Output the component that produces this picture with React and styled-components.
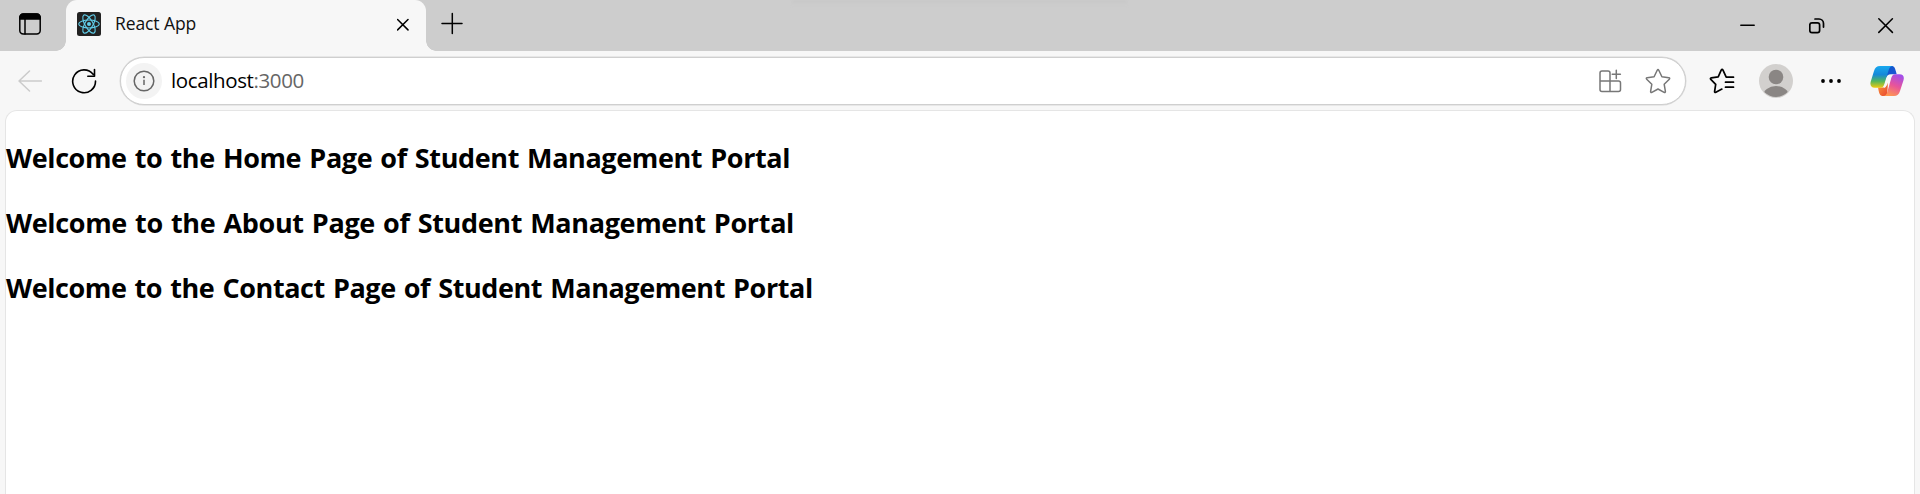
import React from 'react';
import styled, { createGlobalStyle } from 'styled-components';

const GlobalStyle = createGlobalStyle`
  *, *::before, *::after { box-sizing: border-box; }
  body {
    margin: 0;
    background: #f7f7f7;
    font-family: "Segoe UI", "Open Sans", "Noto Sans", sans-serif;
    overflow: hidden;
  }
`;

const Window = styled.div`
  display: flex;
  flex-direction: column;
  width: 1920px;
  height: 494px;
  background: #f7f7f7;
`;

const TabStrip = styled.header`
  position: relative;
  display: flex;
  flex: none;
  height: 51px;
  background: #cdcdcd;
`;

const TopShade = styled.div`
  position: absolute;
  top: 0;
  left: 792px;
  width: 335px;
  height: 6px;
  background: linear-gradient(#c8c8c8, #cdcdcd);
  filter: blur(1px);
`;

const Button = styled.button`
  display: flex;
  flex: none;
  align-items: center;
  justify-content: center;
  width: ${(p) => p.$width}px;
  height: ${(p) => p.$height || 48}px;
  margin: 0 0 0 ${(p) => p.$gap || 0}px;
  padding: 0;
  border: 0;
  background: none;
`;

const Icon = styled.svg`
  display: block;
  flex: none;
  fill: none;
  stroke: ${(p) => p.$color || '#000'};
  stroke-width: ${(p) => p.$weight || 1.5};
  stroke-linecap: round;
  stroke-linejoin: round;
`;

const Tab = styled.div`
  position: relative;
  display: flex;
  align-items: center;
  width: 360px;
  height: 51px;
  margin-left: 6px;
  padding: 0 17px 3px 11px;
  border-radius: 11px 11px 0 0;
  background: #f7f7f7;

  &::before, &::after {
    content: "";
    position: absolute;
    bottom: 0;
    width: 10px;
    height: 10px;
  }
  &::before {
    left: -10px;
    background: radial-gradient(circle at 0 0, transparent 9.5px, #f7f7f7 10px);
  }
  &::after {
    right: -10px;
    background: radial-gradient(circle at 100% 0, transparent 9.5px, #f7f7f7 10px);
  }
`;

const TabTitle = styled.span`
  flex: 1;
  margin-left: 14px;
  padding-bottom: 2px;
  font-size: 17.5px;
  line-height: 24px;
  letter-spacing: -0.1px;
  color: #111;
  white-space: nowrap;
`;

const WindowControls = styled.div`
  display: flex;
  margin-left: auto;
`;

const Toolbar = styled.nav`
  display: flex;
  flex: none;
  align-items: center;
  height: 59px;
`;

const AddressBar = styled.div`
  display: flex;
  flex: none;
  align-items: center;
  width: 1566px;
  height: 48px;
  margin-left: 12px;
  padding: 0 14px 0 5px;
  border: 1.5px solid #cfcfcf;
  border-radius: 24px;
  background: #fff;
  box-shadow: 0 0 0 0.5px #d8d8d8;
`;

const SiteInfo = styled.span`
  display: flex;
  align-items: center;
  justify-content: center;
  width: 36px;
  height: 36px;
  border-radius: 50%;
  background: #f3f3f3;
`;

const Url = styled.span`
  margin-left: 9px;
  padding-bottom: 1px;
  font-size: 20.5px;
  line-height: 28px;
  letter-spacing: -0.38px;
  color: #000;
  white-space: nowrap;
`;

const Port = styled.span`
  color: #666;
`;

const AddressActions = styled.div`
  display: flex;
  margin-left: auto;
`;

const Page = styled.main`
  display: flex;
  flex: 1;
  flex-direction: column;
  gap: 25px;
  margin: 0 5px;
  padding: 27px 0 0;
  border: 1px solid #e5e5e5;
  border-bottom: 0;
  border-radius: 12px 12px 0 0;
  background: #fff;
`;

const Heading = styled.h2`
  margin: 0;
  font-size: 27px;
  font-weight: 700;
  line-height: 40px;
  letter-spacing: ${(p) => p.$tracking}px;
  word-spacing: 1.5px;
  color: #000;
  white-space: nowrap;
`;

const TabActionsIcon = () => (
  <Icon width="24" height="24" viewBox="0 0 24 24">
    <rect x="1.8" y="2" width="20.4" height="20" rx="3.5" />
    <path d="M1.8 7V5.5A3.5 3.5 0 0 1 5.3 2h13.4a3.5 3.5 0 0 1 3.5 3.5V7z" fill="#000" />
    <path d="M7 7v15" />
  </Icon>
);

const ReactIcon = () => (
  <Icon width="24" height="24" viewBox="0 0 24 24" $color="#61cfeb" $weight="1.1">
    <rect width="24" height="24" rx="2.5" fill="#222" stroke="none" />
    <ellipse cx="12" cy="12" rx="10.3" ry="4" />
    <ellipse cx="12" cy="12" rx="10.3" ry="4" transform="rotate(60 12 12)" />
    <ellipse cx="12" cy="12" rx="10.3" ry="4" transform="rotate(120 12 12)" />
    <circle cx="12" cy="12" r="2" fill="#61cfeb" stroke="none" />
  </Icon>
);

const BackIcon = () => (
  <Icon width="24" height="24" viewBox="0 0 24 24" $color="#cbcbcb">
    <path d="M11.5 2 1 12l10.500 10M1 12h22.500" />
  </Icon>
);

const ReloadIcon = () => (
  <Icon width="26" height="26" viewBox="0 0 26 26" $weight="1.6">
    <path d="M24.500 13A11.400 11.400 0 1 1 22.100 6.300M23.500 1.500v6.800h-6.700" />
  </Icon>
);

const InfoIcon = () => (
  <Icon width="22" height="22" viewBox="0 0 22 22" $color="#666" $weight="1.5">
    <circle cx="11" cy="11" r="9.800" />
    <path d="M11 9.800v5.200" strokeLinecap="butt" />
    <circle cx="11" cy="7.200" r="1.100" fill="#666" stroke="none" />
  </Icon>
);

const AppsIcon = () => (
  <Icon width="24" height="24" viewBox="0 0 24 24" $color="#777" $weight="1.5">
    <path d="M2 12V4a2 2 0 0 1 2-2h6a2 2 0 0 1 2 2v8h8.500a2 2 0 0 1 2 2v6.500a2 2 0 0 1-2 2H4a2 2 0 0 1-2-2zM2 12h10v10.500M18.300 1.200v8.200M14.200 5.300h8.200" />
  </Icon>
);

const StarIcon = () => (
  <Icon width="26" height="26" viewBox="0 0 26 26" $color="#777" $weight="1.5">
    <path d="M12.200 2.300q.8-1.400 1.600 0l3.100 6.500 6.900 1q1.500.3.500 1.500l-5.100 5 1.200 7.100q.1 1.500-1.300.9L13 21l-6.100 3.300q-1.400.6-1.300-.9l1.200-7.100-5.100-5q-1-1.200.5-1.500l6.900-1z" />
  </Icon>
);

const FavoritesIcon = () => (
  <Icon width="26" height="26" viewBox="0 0 26 26" $weight="1.7">
    <path d="M24.500 9.200h-7.300L14 2.200q-.9-1.600-1.800 0l-3 6.700-6.900 1q-1.500.3-.5 1.500l4.900 5-1.100 7.100q-.1 1.400 1.300.8l6-3.200M16.500 14.200h8M16.500 19.200h8" />
  </Icon>
);

const AvatarIcon = () => (
  <Icon width="34" height="34" viewBox="0 0 34 34">
    <defs>
      <clipPath id="avatar"><circle cx="17" cy="17" r="16" /></clipPath>
    </defs>
    <circle cx="17" cy="17" r="17" fill="#d2d0ce" stroke="none" />
    <g clipPath="url(#avatar)" fill="#8a8684" stroke="none">
      <circle cx="17" cy="13" r="7.300" />
      <ellipse cx="17" cy="32" rx="13" ry="10" />
    </g>
  </Icon>
);

const MoreIcon = () => (
  <Icon width="22" height="6" viewBox="0 0 22 6">
    <g fill="#000" stroke="none">
      <circle cx="3" cy="3" r="1.900" />
      <circle cx="11" cy="3" r="1.900" />
      <circle cx="19" cy="3" r="1.900" />
    </g>
  </Icon>
);

const CopilotIcon = () => (
  <Icon width="34" height="32" viewBox="0 0 34 32">
    <defs>
      <linearGradient id="cool" x1="0" y1="0" x2="0" y2="1">
        <stop offset="0" stopColor="#18a9ef" />
        <stop offset=".4" stopColor="#1688d8" />
        <stop offset=".7" stopColor="#53b65d" />
        <stop offset="1" stopColor="#f0ca10" />
      </linearGradient>
      <linearGradient id="warm" x1=".7" y1="0" x2=".3" y2="1">
        <stop offset="0" stopColor="#a24eea" />
        <stop offset=".5" stopColor="#e8549a" />
        <stop offset="1" stopColor="#ff994f" />
      </linearGradient>
      <linearGradient id="fold" x1="0" y1="0" x2="1" y2="1">
        <stop offset="0" stopColor="#0a58c9" />
        <stop offset="1" stopColor="#2455d8" />
      </linearGradient>
      <linearGradient id="ember" x1="0" y1="0" x2="1" y2="1">
        <stop offset="0" stopColor="#f99b3d" />
        <stop offset="1" stopColor="#e94330" />
      </linearGradient>
    </defs>
    <g stroke="none">
      <path d="M17 1h4.500c3 0 3.500 2.200 4.300 5l.9 3.200H21c-3 0-4.500 1.500-5.500 5z" fill="url(#fold)" />
      <path d="M17 31h-4c-3 0-3.600-2.200-4.300-5L8 22.600h4.500c3 0 4.500-1.500 5.500-5z" fill="url(#ember)" />
      <path d="M10 1h13c-2.300 0-3.500 1.500-4.300 4l-4 13c-1 3.500-2 4.700-4.700 4.700H4.700C1 22.700-.2 20.300.7 16.700L4 6C5 2.500 6.800 1 10 1z" fill="url(#cool)" />
      <path d="M24 31H13c2.300 0 3.500-1.500 4.300-4l3.700-13c1-3.500 2-4.800 4.700-4.800h3.800c3.700 0 5 2.400 4 6L30 26c-1 3.500-2.800 5-6 5z" fill="url(#warm)" />
      <path d="M20.500 10.700c-1.400 1-2 2.300-2.700 4.600l-1.800 6c-.4 1.300-1.200 1.700-2.500 1.700l.8-2 2.700-9c.4-1.100 1.400-1.500 3.500-1.300z" fill="#f7f7f7" />
    </g>
  </Icon>
);

const headings = [
  { page: 'Home', tracking: -0.39 },
  { page: 'About', tracking: -0.35 },
  { page: 'Contact', tracking: -0.42 },
];

export default function App() {
  return (
    <Window>
      <GlobalStyle />
      <TabStrip>
        <TopShade />
        <Button $width={60} aria-label="Tab actions"><TabActionsIcon /></Button>
        <Tab>
          <ReactIcon />
          <TabTitle>React App</TabTitle>
          <Button $width={12} $height={14} aria-label="Close tab">
            <Icon width="12" height="14" viewBox="0 0 12 14"><path d="M.6 2.500l10.400 10.400M11 2.500.6 12.900" /></Icon>
          </Button>
        </Tab>
        <Button $width={24} $gap={14} aria-label="New tab">
          <Icon width="24" height="24" viewBox="0 0 24 24"><path d="M2 11.500h20M12.300 1.500v20" /></Icon>
        </Button>
        <WindowControls>
          <Button $width={69} $height={51} aria-label="Minimize">
            <Icon width="16" height="16" viewBox="0 0 16 16"><path d="M.8 7.300h13.400" /></Icon>
          </Button>
          <Button $width={69} $height={51} aria-label="Restore">
            <Icon width="16" height="16" viewBox="0 0 16 16" $weight="1.700">
              <rect x=".8" y="4.800" width="9.800" height="9.800" rx="2.200" />
              <path d="M6 1h4a4.500 4.500 0 0 1 4.500 4.500v3.600" />
            </Icon>
          </Button>
          <Button $width={69} $height={51} aria-label="Close">
            <Icon width="16" height="16" viewBox="0 0 16 16"><path d="M.8.800l13.600 13.600M14.400.800.8 14.400" /></Icon>
          </Button>
        </WindowControls>
      </TabStrip>
      <Toolbar>
        <Button $width={24} $gap={18} aria-label="Back"><BackIcon /></Button>
        <Button $width={48} $gap={18} aria-label="Reload"><ReloadIcon /></Button>
        <AddressBar>
          <SiteInfo><InfoIcon /></SiteInfo>
          <Url>localhost<Port>:3000</Port></Url>
          <AddressActions>
            <Button $width={24} aria-label="Install app"><AppsIcon /></Button>
            <Button $width={26} $gap={23} aria-label="Add favorite"><StarIcon /></Button>
          </AddressActions>
        </AddressBar>
        <Button $width={26} $gap={23} aria-label="Favorites"><FavoritesIcon /></Button>
        <Button $width={34} $gap={24} aria-label="Profile"><AvatarIcon /></Button>
        <Button $width={22} $gap={27} aria-label="More"><MoreIcon /></Button>
        <Button $width={34} $gap={28} aria-label="Copilot"><CopilotIcon /></Button>
      </Toolbar>
      <Page>
        {headings.map(({ page, tracking }) => (
          <Heading key={page} $tracking={tracking}>
            Welcome to the {page} Page of Student Management Portal
          </Heading>
        ))}
      </Page>
    </Window>
  );
}
